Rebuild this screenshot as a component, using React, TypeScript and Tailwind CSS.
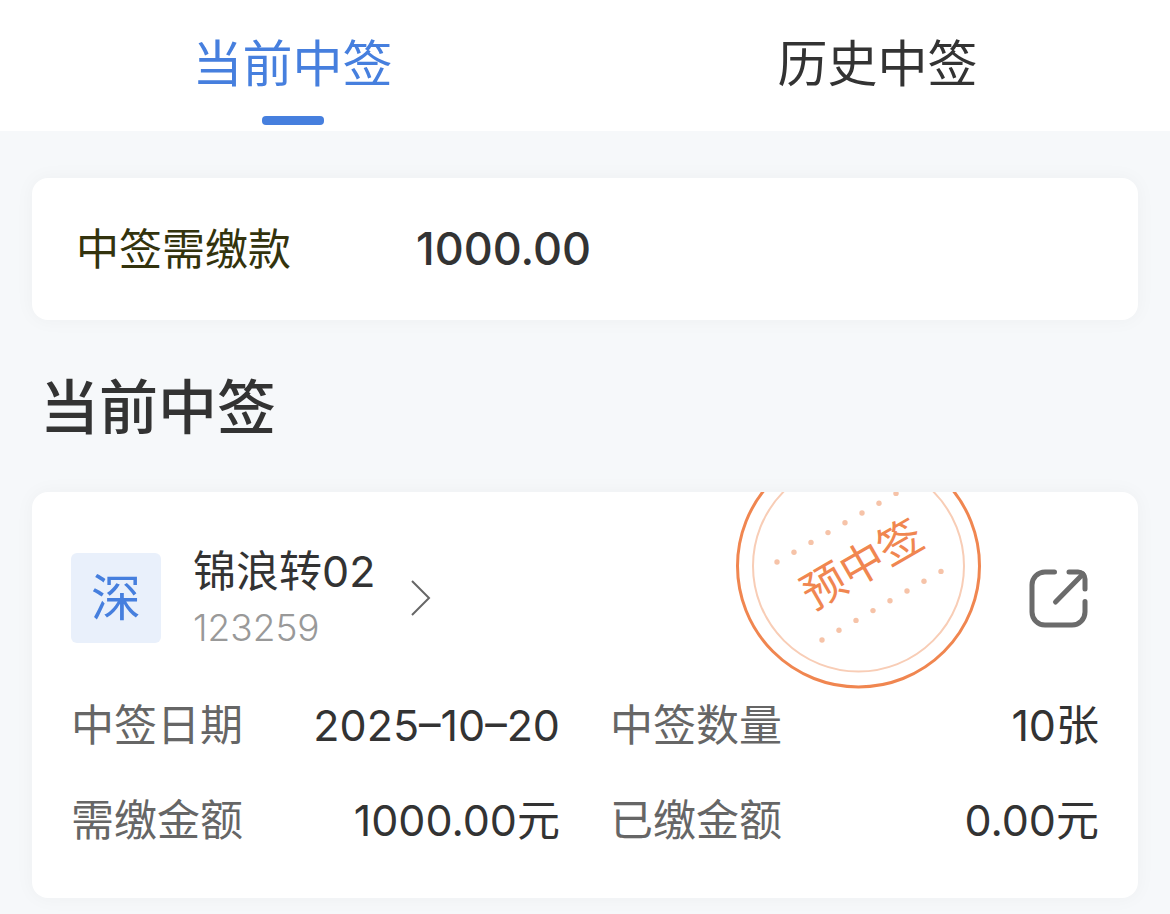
import { useState } from "react";

const TABS = ["当前中签", "历史中签"];

const DETAILS = [
  { label: "中签日期", value: "2025–10–20" },
  { label: "中签数量", value: "10张" },
  { label: "需缴金额", value: "1000.00元" },
  { label: "已缴金额", value: "0.00元" },
];

const DOTS = [0, 1, 2, 3, 4, 5, 6, 7];

function Stamp() {
  return (
    <svg
      className="pointer-events-none absolute -top-12 right-[156px] h-[246px] w-[246px]"
      viewBox="0 0 246 246"
      fill="none"
    >
      <circle cx="122.500" cy="122" r="121" stroke="#f08650" strokeWidth="3" />
      <circle cx="122.500" cy="122" r="105.5" stroke="#f8cdb6" strokeWidth="2" />
      {DOTS.map((i) => (
        <g key={i} fill="#f6c3a8">
          <circle cx={41 + i * 17} cy={118 - i * 9.8} r="2.7" />
          <circle cx={86 + i * 17} cy={196 - i * 9.8} r="2.7" />
        </g>
      ))}
      <text
        x="126"
        y="136"
        transform="rotate(-30 126 120)"
        textAnchor="middle"
        fontSize="44"
        fontWeight="400"
        fill="#f08650"
      >
        预中签
      </text>
    </svg>
  );
}

function ShareIcon() {
  return (
    <svg
      className="h-15 w-15"
      viewBox="0 0 60 60"
      fill="none"
      stroke="#6b6b6b"
      strokeWidth="5"
      strokeLinecap="round"
      strokeLinejoin="round"
      aria-hidden="true"
    >
      <path d="M26.500 4H17A13 13 0 0 0 4 17V44A13 13 0 0 0 17 57H44A13 13 0 0 0 57 44V33.500" />
      <path d="M41 4H50A7 7 0 0 1 57 11V21" />
      <path d="M27.500 34L55 6" />
    </svg>
  );
}

export default function App() {
  const [active, setActive] = useState(0);

  return (
    <div className="min-h-screen bg-[#f6f8fa] pb-4 font-[Inter,'Noto_Sans_CJK_SC',sans-serif] font-[380] text-[#333]">
      {/* Tabs */}
      <nav className="grid grid-cols-2 bg-white">
        {TABS.map((tab, i) => (
          <button
            key={tab}
            type="button"
            onClick={() => setActive(i)}
            className={`flex h-[131px] flex-col items-center pt-7 text-[50px] leading-[72px] ${
              active === i ? "text-[#467fde]" : "text-[#333]"
            }`}
          >
            {tab}
            {active === i && <span className="mt-4 h-[9px] w-[62px] rounded-[4px] bg-[#467fde]" />}
          </button>
        ))}
      </nav>

      <main className="px-8 pt-[47px]">
        {/* Amount to pay */}
        <section className="flex items-center gap-[125px] rounded-2xl bg-white px-11 py-10 leading-[62px] shadow-[0_0_20px_rgba(0,0,0,0.04)]">
          <span className="text-[43px] text-[#33330d]">中签需缴款</span>
          <span className="text-[45px] font-medium">1000.00</span>
        </section>

        <h1 className="mt-[46px] pl-2 text-[59px] leading-[84px] font-medium">当前中签</h1>

        <article className="relative mt-[42px] overflow-hidden rounded-2xl bg-white px-[39px] pt-[61px] pb-12 shadow-[0_0_20px_rgba(0,0,0,0.04)]">
          <Stamp />
          <div className="flex h-[90px] items-center">
            <span className="flex h-[90px] w-[90px] items-center justify-center rounded-md bg-[#e9f0fb] text-[50px] text-[#467fde]">
              深
            </span>
            <a href="#detail" className="ml-8 flex items-center gap-9">
              <span className="flex flex-col">
                <span className="text-[43px] leading-[60px]">锦浪转02</span>
                <span className="text-[37px] leading-[54px] font-light text-[#999]">123259</span>
              </span>
              <svg className="h-9 w-5" viewBox="0 0 20 36" fill="none" stroke="#666" strokeWidth="2" aria-hidden="true">
                <path d="M1 1L18 18L1 35" />
              </svg>
            </a>
            <button type="button" aria-label="分享" className="mr-[11px] ml-auto">
              <ShareIcon />
            </button>
          </div>

          <dl className="mt-[52px] grid grid-cols-2 gap-x-[50px] gap-y-[35px] text-[43px] leading-[60px]">
            {DETAILS.map(({ label, value }) => (
              <div key={label} className="flex justify-between">
                <dt className="text-[#666]">{label}</dt>
                <dd>{value}</dd>
              </div>
            ))}
          </dl>
        </article>
      </main>
    </div>
  );
}
